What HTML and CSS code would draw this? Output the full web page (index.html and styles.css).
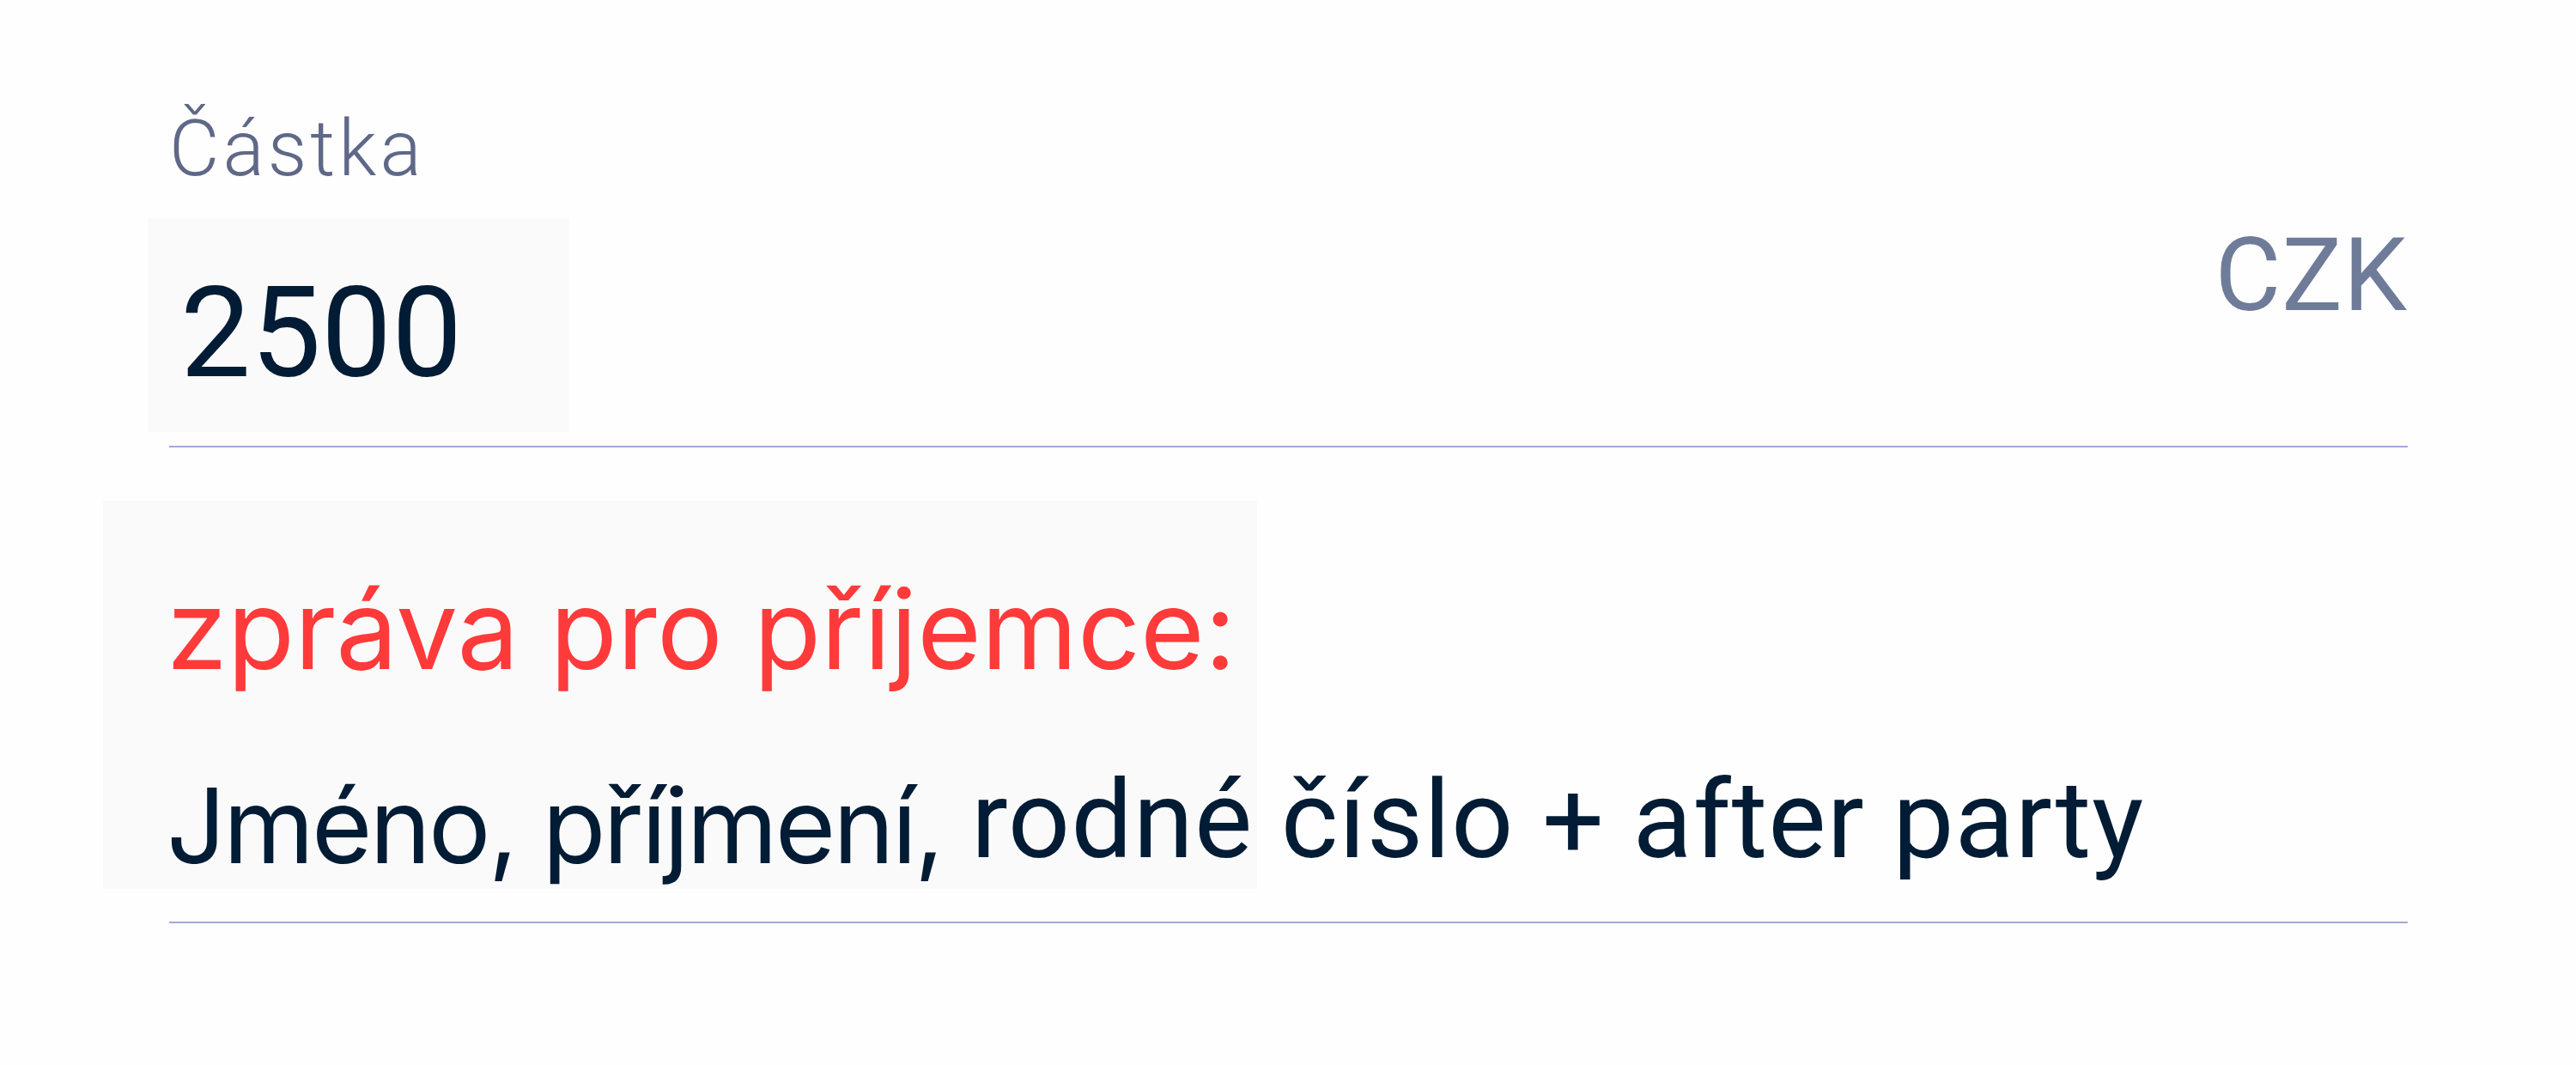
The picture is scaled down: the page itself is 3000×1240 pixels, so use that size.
FILE: index.html
```html
<!DOCTYPE html>
<html lang="cs">
<head>
<meta charset="utf-8">
<title>Platba</title>
<link rel="stylesheet" href="styles.css">
</head>
<body>
<main class="form">
  <section class="field field-amount">
    <div class="label">Částka</div>
    <div class="amount-row">
      <div class="amount-box"><span class="amount">2500</span></div>
      <span class="currency">CZK</span>
    </div>
    <div class="divider"></div>
  </section>
  <section class="field field-message">
    <div class="message-box">
      <div class="message-label">zpráva pro příjemce:</div>
      <div class="message-value"><span class="part-a">Jméno, příjmení,</span> <span class="part-b">rodné číslo + after party</span></div>
    </div>
    <div class="divider divider-2"></div>
  </section>
</main>
</body>
</html>
```
FILE: styles.css
```css
html, body {
  margin: 0;
  padding: 0;
  background: #fefefe;
}

.form {
  width: 2607px;
  padding: 130px 0 0 197px;
  display: flex;
  flex-direction: column;
}

.field {
  display: flex;
  flex-direction: column;
}

.label {
  font-family: Roboto, "Liberation Sans", sans-serif;
  font-weight: 300;
  font-size: 90px;
  line-height: 88px;
  letter-spacing: 4px;
  color: #5f6887;
  height: 88px;
}

.amount-row {
  margin-top: 36px;
  display: flex;
  justify-content: space-between;
  align-items: flex-start;
}

.amount-box {
  margin-left: -25px;
  width: 491px;
  height: 249px;
  padding: 62px 0 0 38px;
  box-sizing: border-box;
  background: #fafafa;
}

.amount {
  font-family: Roboto, "Liberation Sans", sans-serif;
  font-size: 146px;
  line-height: 146px;
  color: #011c34;
  display: block;
}

.currency {
  margin-top: 8px;
  font-family: Roboto, "Liberation Sans", sans-serif;
  font-size: 118px;
  line-height: 118px;
  letter-spacing: 1px;
  color: #6f7c99;
}

.divider {
  margin-top: 16px;
  height: 2px;
  background: #a2aad2;
}

.field-message {
  margin-top: 62px;
}

.message-box {
  margin-left: -77px;
  width: 1344px;
  height: 452px;
  box-sizing: border-box;
  padding: 86px 0 0 74px;
  background: #fafafa;
  white-space: nowrap;
}

.message-label {
  font-family: Inter, "Noto Sans", sans-serif;
  font-size: 128px;
  line-height: 128px;
  color: #ff3a3a;
}

.message-value {
  margin-top: 96px;
  font-family: Inter, "Noto Sans", sans-serif;
  font-size: 121px;
  line-height: 124px;
  color: #011c34;
}

.part-a {
  letter-spacing: -3px;
}

.part-b {
  font-family: Roboto, "Liberation Sans", sans-serif;
  font-size: 127px;
  letter-spacing: 1px;
  vertical-align: 7px;
}

.divider-2 {
  margin-top: 38px;
}
```
